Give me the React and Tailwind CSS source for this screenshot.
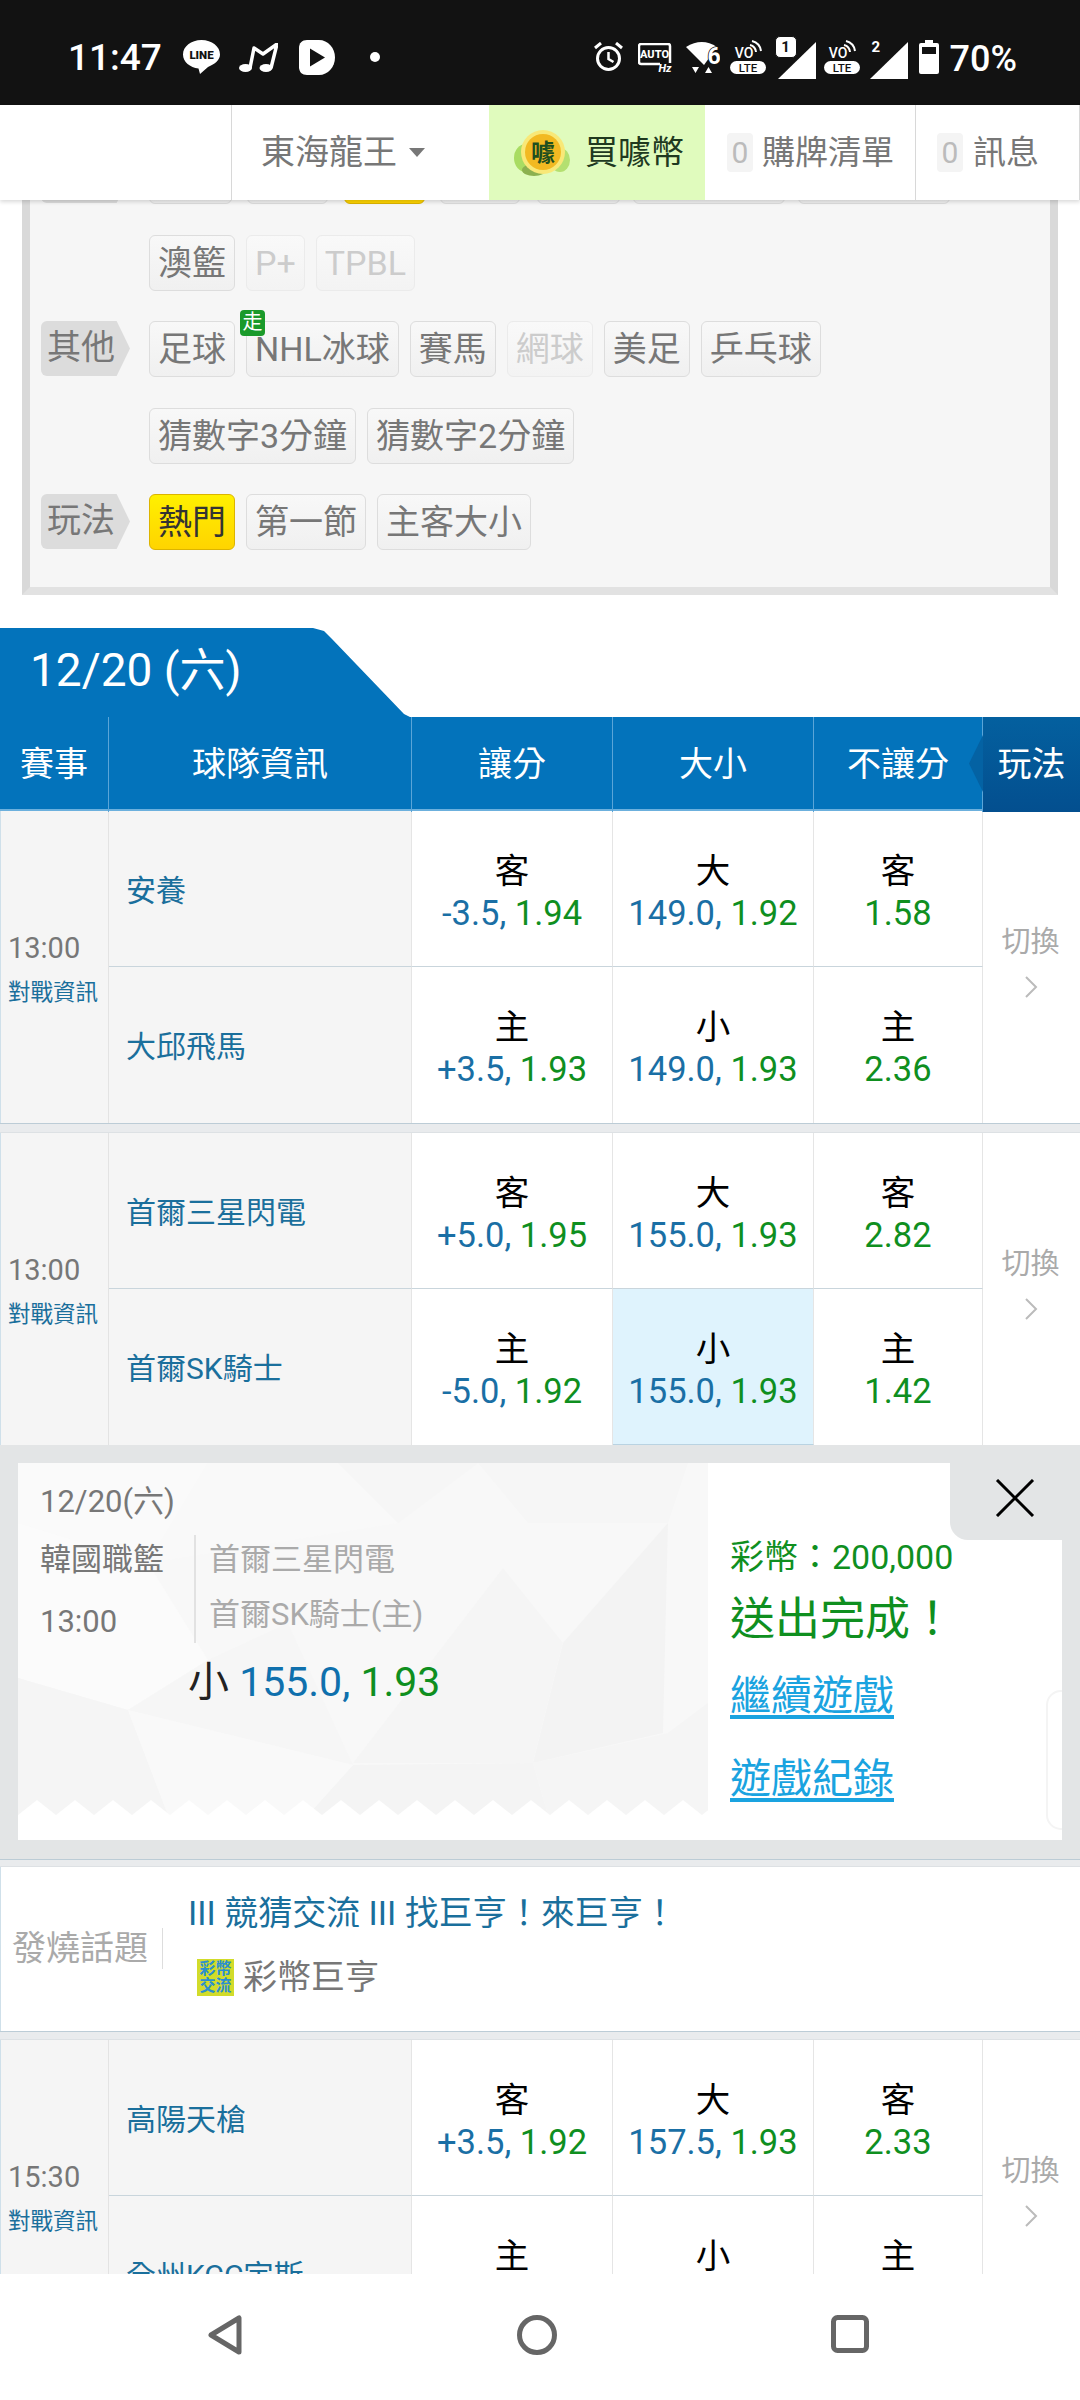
import { Fragment } from "react";

const games = [
  {
    time: "13:00",
    rows: [
      { team: "安養", side: "客", line: "-3.5", odds: "1.94", ou: "大", total: "149.0", ouOdds: "1.92", ml: "1.58" },
      { team: "大邱飛馬", side: "主", line: "+3.5", odds: "1.93", ou: "小", total: "149.0", ouOdds: "1.93", ml: "2.36" },
    ],
  },
  {
    time: "13:00",
    rows: [
      { team: "首爾三星閃電", side: "客", line: "+5.0", odds: "1.95", ou: "大", total: "155.0", ouOdds: "1.93", ml: "2.82" },
      { team: "首爾SK騎士", side: "主", line: "-5.0", odds: "1.92", ou: "小", total: "155.0", ouOdds: "1.93", ml: "1.42", picked: true },
    ],
  },
];

const lastGame = {
  time: "15:30",
  rows: [
    { team: "高陽天槍", side: "客", line: "+3.5", odds: "1.92", ou: "大", total: "157.5", ouOdds: "1.93", ml: "2.33" },
    { team: "全州KCC宇斯", side: "主", line: "+3.5", odds: "1.93", ou: "小", total: "157.5", ouOdds: "1.93", ml: "1.58" },
  ],
};

const VoLte = ({ className }) => (
  <svg className={className} width="36" height="34" viewBox="0 0 36 34">
    <text x="14" y="18" textAnchor="middle" fontSize="14" fontWeight="500" fill="#fff">VO</text>
    <path d="M20 5a8 8 0 0 1 6 7M22 1a12 12 0 0 1 9 10" fill="none" stroke="#fff" strokeWidth="2" />
    <rect x="0" y="21" width="36" height="13" rx="6.500" fill="#fff" />
    <text x="18" y="31.500" textAnchor="middle" fontSize="11.500" fontWeight="500" fill="#121212">LTE</text>
  </svg>
);

const StatusBar = () => (
  <div className="h-[105px] shrink-0 bg-[#121212] flex items-center text-white pt-[9px]">
    <span className="ml-[68px] text-[37px] font-medium leading-none w-[92px]">11:47</span>
    <svg className="ml-[23px]" width="37" height="34" viewBox="0 0 37 34">
      <path d="M18.5 0C8 0 0 6.500 0 14.500c0 7.500 7 13 15.500 14l1.500 5.500 8-7c7-3 12-7 12-12.500C37 6.500 29 0 18.500 0z" fill="#fff" />
      <text x="18.500" y="19" textAnchor="middle" fontSize="11.500" fontWeight="900" fill="#121212">LINE</text>
    </svg>
    <svg className="ml-[19px]" width="39" height="29" viewBox="0 0 39 29">
      <path d="M11 25L15 5l9 6 14-10-6 24" fill="none" stroke="#fff" strokeWidth="3.500" strokeLinejoin="round" />
      <ellipse cx="6.500" cy="25" rx="6.500" ry="4" fill="#fff" />
      <ellipse cx="27" cy="25" rx="6.500" ry="4" fill="#fff" />
    </svg>
    <svg className="ml-[21px]" width="36" height="35" viewBox="0 0 36 35">
      <path d="M8 0h12c9 0 16 8 16 17.500S29 35 20 35H8c-5 0-8-3-8-8V8c0-5 3-8 8-8z" fill="#fff" />
      <path d="M11 8.500l15 9-15 9z" fill="#121212" />
    </svg>
    <span className="ml-[35px] w-[10px] h-[10px] rounded-full bg-white" />

    <div className="ml-auto flex items-center mr-[63px]">
      <svg width="29" height="30" viewBox="0 0 29 30">
        <circle cx="14.500" cy="16.500" r="11" fill="none" stroke="#fff" strokeWidth="3" />
        <path d="M14.500 10v7l5 3" fill="none" stroke="#fff" strokeWidth="2.500" />
        <path d="M1 6l6-5M28 6l-6-5" fill="none" stroke="#fff" strokeWidth="3" />
      </svg>
      <svg className="ml-[15px]" width="35" height="29" viewBox="0 0 35 29">
        <path d="M32 20V3a2 2 0 0 0-2-2H3a2 2 0 0 0-2 2v16a2 2 0 0 0 2 2h19" fill="none" stroke="#fff" strokeWidth="2.500" />
        <text x="16.500" y="15" textAnchor="middle" fontSize="11" fontWeight="800" fill="#fff">AUTO</text>
        <text x="27" y="28.500" textAnchor="middle" fontSize="11" fontWeight="800" fontStyle="italic" fill="#fff">Hz</text>
      </svg>
      <svg className="ml-[13px]" width="34" height="34" viewBox="0 0 34 34">
        <path d="M0 7Q16 -3 31 7L18 25z" fill="#fff" />
        <path d="M6 27h7l-3.500 6zM19 33l3.500-6 3.500 6z" fill="#fff" />
        <text x="28" y="24" textAnchor="middle" fontSize="23" fontWeight="700" fill="#fff" stroke="#121212" strokeWidth="1.500" paintOrder="stroke">6</text>
      </svg>
      <VoLte className="ml-[10px]" />
      <div className="relative w-[40px] h-[40px] ml-[9px] mb-[-6px]">
        <svg className="absolute left-[3px] top-[2px]" width="38" height="37" viewBox="0 0 38 37">
          <path d="M38 0v37H0z" fill="#fff" />
        </svg>
        <span className="absolute left-0 top-[-4px] w-[22px] h-[22px] rounded-[5px] bg-white border border-[#121212] text-[#121212] text-[15px] font-bold leading-[20px] text-center">1</span>
      </div>
      <VoLte className="ml-[9px]" />
      <div className="relative w-[48px] h-[40px] mb-[-6px]">
        <svg className="absolute left-[10px] top-[2px]" width="38" height="37" viewBox="0 0 38 37">
          <path d="M38 0v37H0z" fill="#fff" />
        </svg>
        <span className="absolute left-[12px] top-[-2px] text-[15px] font-bold leading-[18px]">2</span>
      </div>
      <svg className="ml-[11px]" width="20" height="34" viewBox="0 0 20 34">
        <path d="M6 0h8v3h4a2 2 0 0 1 2 2v27a2 2 0 0 1-2 2H2a2 2 0 0 1-2-2V5a2 2 0 0 1 2-2h4z" fill="#fff" />
        <rect x="3" y="7" width="14" height="7" fill="#121212" />
      </svg>
      <span className="ml-[11px] mt-[3px] text-[36px] font-medium leading-none">70%</span>
    </div>
  </div>
);

const CoinIcon = () => (
  <svg width="56" height="50" viewBox="0 0 56 50">
    <ellipse cx="12" cy="30" rx="12" ry="14" fill="#a9dc62" />
    <ellipse cx="46" cy="32" rx="10" ry="12" fill="#b4e070" />
    <ellipse cx="20" cy="42" rx="12" ry="6" fill="#8cb050" />
    <circle cx="29" cy="24" r="22" fill="#f8e878" />
    <circle cx="29" cy="24" r="18" fill="#f2b922" />
    <text x="29" y="33" textAnchor="middle" fontSize="24" fontWeight="700" fill="#1f4f1f">噱</text>
  </svg>
);

const CountBadge = () => (
  <span className="w-[26px] h-[39px] rounded-[4px] bg-[#f4f4f4] text-[#bbbbbb] text-[30px] leading-[39px] text-center">0</span>
);

const TopNav = () => (
  <div className="h-[95px] shrink-0 bg-white flex items-stretch text-[#777777] text-[33px] shadow-[0_2px_4px_rgba(0,0,0,0.15)] relative z-10">
    <div className="w-[232px] border-r border-[#d8d8d8]" />
    <div className="w-[257px] flex items-center pl-[29px] text-[34px]">
      東海龍王
      <span className="ml-[12px] w-0 h-0 border-x-[8px] border-x-transparent border-t-[9px] border-t-[#777777]" />
    </div>
    <div className="w-[216px] bg-[#e0fbbd] flex items-center pl-[25px] text-[#20391f]">
      <CoinIcon />
      <span className="ml-[15px]">買噱幣</span>
    </div>
    <div className="w-[211px] flex items-center pl-[22px] gap-[9px] border-r border-[#d8d8d8]">
      <CountBadge />
      購牌清單
    </div>
    <div className="flex-1 flex items-center pl-[21px] gap-[10px] border-r border-[#d8d8d8]">
      <CountBadge />
      訊息
    </div>
  </div>
);

const Chip = ({ children, off, active, className = "" }) => (
  <span
    className={`relative h-[56px] px-[8px] rounded-[6px] border text-[34px] leading-[54px] whitespace-nowrap bg-gradient-to-b ${
      active
        ? "from-[#fff000] to-[#ffd400] border-[#dcb400] text-[#333333]"
        : off
          ? "from-[#f9f9f9] to-[#f3f3f3] border-[#ebebeb] text-[#cccccc]"
          : "from-[#f8f8f8] to-[#f0f0f0] border-[#dddddd] text-[#777777]"
    } ${className}`}
  >
    {children}
  </span>
);

const RowLabel = ({ children }) => (
  <span className="w-[89px] h-[55px] pl-[6px] mr-[8px] bg-[#dcdcdc] rounded-l-[6px] text-[34px] leading-[52px] text-[#777777] [clip-path:polygon(0_0,85%_0,100%_50%,85%_100%,0_100%)]">
    {children}
  </span>
);

const FilterRow = ({ label, children }) => (
  <div className={`flex gap-[11px] h-[56px] ${label ? "" : "pl-[108px]"}`}>
    {label && <RowLabel>{label}</RowLabel>}
    {children}
  </div>
);

const FilterPanel = () => (
  <div className="mx-[22px] -mt-[52px] h-[447px] bg-[#f6f6f6] border-x-[8px] border-x-[#d9d9d9] border-b-[8px] border-b-[#e2e2e2] pl-[11px] flex flex-col gap-[30.500px]">
    <FilterRow label=" ">
      <Chip className="w-[83px]" />
      <Chip className="w-[81px] ml-[4px]" />
      <Chip active className="w-[81px] ml-[5px]" />
      <Chip className="w-[80px] ml-[4px]" />
      <Chip className="w-[83px] ml-[6px]" />
      <Chip className="w-[152px] ml-[2px]" />
      <Chip className="w-[152px] ml-[2px]" />
    </FilterRow>
    <FilterRow>
      <Chip>澳籃</Chip>
      <Chip off>P+</Chip>
      <Chip off>TPBL</Chip>
    </FilterRow>
    <FilterRow label="其他">
      <Chip>足球</Chip>
      <Chip>
        NHL冰球
        <span className="absolute left-[-7px] top-[-12px] w-[25px] h-[26px] rounded-[4px] bg-[#1a9a2a] text-white text-[20px] leading-[25px] text-center">走</span>
      </Chip>
      <Chip>賽馬</Chip>
      <Chip off>網球</Chip>
      <Chip>美足</Chip>
      <Chip>乒乓球</Chip>
    </FilterRow>
    <FilterRow>
      <Chip>猜數字3分鐘</Chip>
      <Chip>猜數字2分鐘</Chip>
    </FilterRow>
    <FilterRow label="玩法">
      <Chip active>熱門</Chip>
      <Chip>第一節</Chip>
      <Chip>主客大小</Chip>
    </FilterRow>
  </div>
);

const HEAD = ["賽事", "球隊資訊", "讓分", "大小", "不讓分"];

const TableHead = () => (
  <>
    <div className="mt-[33px] w-[410px] h-[89px] bg-[#0373bb] text-white text-[46px] leading-[85px] pl-[30px] [clip-path:polygon(0_0,313px_0,324px_3px,332px_11px,404px_86px,410px_89px,0_89px)]">
      12/20 (六)
    </div>
    <div className="relative h-[94px] bg-[#0373bb] border-b-2 border-[#6cb0dd] grid grid-cols-[109px_303px_201px_201px_169px_97px] text-white text-[34px] leading-[95px] text-center">
      {HEAD.map((h) => (
        <span key={h} className="border-r border-[#5aa5d8]">{h}</span>
      ))}
      <span className="bg-gradient-to-b from-[#04609f] to-[#034f8f]">玩法</span>
      <span className="absolute left-[969px] top-[18px] w-[14px] h-[57px] bg-[#0462a3] [clip-path:polygon(100%_0,0_50%,100%_100%)]" />
    </div>
  </>
);

const OddsCell = ({ top, blue, green, picked, last }) => (
  <div
    className={`flex flex-col items-center justify-center pt-[6px] border-r border-[#e5e5e5] ${
      picked ? "bg-[#dff3fd] border-b border-b-[#b9d3e2]" : last ? "" : "border-b border-b-[#c9d5dc]"
    } text-[34.500px] leading-[42px]`}
  >
    <span className="text-black">{top}</span>
    <span className="whitespace-nowrap">
      {blue && <span className="text-[#1a6fa5]">{blue}, </span>}
      <span className="text-[#0f8f1f]">{green}</span>
    </span>
  </div>
);

const GameRows = ({ game }) => (
  <div className="grid grid-cols-[109px_303px_201px_201px_169px_97px] grid-rows-[156px_156px] bg-white">
    <div className="row-span-2 bg-[#f5f5f5] border-l border-l-[#cfe0ea] border-r border-r-[#e3e3e3] flex flex-col justify-center pl-[7px]">
      <span className="text-[29px] leading-[40px] text-[#777777]">{game.time}</span>
      <span className="text-[22.500px] leading-[30px] text-[#1a6f9c] mt-[9px] whitespace-nowrap">對戰資訊</span>
    </div>
    {game.rows.map((r, i) => (
      <Fragment key={r.team}>
        <div
          style={{ gridColumn: 2, gridRow: i + 1 }}
          className={`bg-[#f5f5f5] border-r border-[#e5e5e5] flex items-center pl-[17px] pt-[3px] text-[30px] text-[#1a6f9c] ${i === 0 ? "border-b border-b-[#c9d5dc]" : ""}`}
        >
          {r.team}
        </div>
        <div style={{ gridColumn: 3, gridRow: i + 1 }} className="grid">
          <OddsCell top={r.side} blue={r.line} green={r.odds} last={i === 1} />
        </div>
        <div style={{ gridColumn: 4, gridRow: i + 1 }} className="grid">
          <OddsCell top={r.ou} blue={r.total} green={r.ouOdds} picked={r.picked} last={i === 1} />
        </div>
        <div style={{ gridColumn: 5, gridRow: i + 1 }} className="grid">
          <OddsCell top={r.side} green={r.ml} last={i === 1} />
        </div>
      </Fragment>
    ))}
    <div style={{ gridColumn: 6, gridRow: "1 / span 2" }} className="flex flex-col items-center justify-center pb-[14px] pr-[2px]">
      <span className="text-[29px] leading-[40px] text-[#aaaaaa]">切換</span>
      <svg className="mt-[14px]" width="14" height="22" viewBox="0 0 14 22">
        <path d="M2 1l10 10L2 21" fill="none" stroke="#bbbbbb" strokeWidth="2" />
      </svg>
    </div>
  </div>
);

const Band = ({ className = "h-[10px]" }) => (
  <div className={`${className} bg-[#e9ebed] border-y border-t-[#bcccd6] border-b-[#dde1e4]`} />
);

const ZIGZAG = Array.from({ length: 19 }, (_, i) => i * 38);

const Ticket = () => (
  <div className="h-[414px] bg-[#e3e5e6] px-[18px] pt-[18px]">
    <div className="relative h-[377px] bg-white flex overflow-hidden">
      <div className="relative w-[690px] h-[352px] bg-[#f8f8f8] pl-[22px] pt-[19px] text-[31px] text-[#777777]">
        <svg className="absolute inset-0" width="690" height="352" viewBox="0 0 690 352">
          <path d="M0 0h190l-60 100L0 60z" fill="#fafafa" />
          <path d="M190 0h130l60 60-250 40z" fill="#f9f9f9" />
          <path d="M320 0h140l-80 60z" fill="#f6f6f6" />
          <path d="M460 0h210l-20 60H510z" fill="#f6f6f6" />
          <path d="M0 215l110 32 80-50-60-97L0 60z" fill="#fbfbfb" />
          <path d="M110 247l225 55L270 160 190 197z" fill="#f6f6f6" />
          <path d="M545 180l-30 120H335l150-195z" fill="#f5f5f5" />
          <path d="M650 60l-5 210-130 30 30-120 105-120z" fill="#f3f3f3" />
          <path d="M0 215v137h150l-40-105z" fill="#f5f5f5" />
          <path d="M335 302l-45 50h240l-15-52z" fill="#f4f4f4" />
          <path d="M110 247l40 105h140l45-50z" fill="#f9f9f9" />
          <path d="M650 270l40-30v112h-160l-15-52z" fill="#f5f5f5" />
        </svg>
        <div className="relative">
          <div className="leading-[40px]">12/20(六)</div>
          <div className="flex mt-[13px] h-[108px]">
            <div className="w-[154px] leading-[50px]">
              <div>韓國職籃</div>
              <div className="mt-[12px]">13:00</div>
            </div>
            <div className="border-l-2 border-[#e2e2e2] pl-[13px] leading-[50px] text-[#aaaaaa]">
              <div>首爾三星閃電</div>
              <div className="mt-[5px]">首爾SK騎士(主)</div>
            </div>
          </div>
          <div className="mt-[14px] pl-[148px] text-[41px] leading-[50px] whitespace-nowrap">
            <span className="text-[#222222]">小 </span>
            <span className="text-[#0f70ad]">155.0, </span>
            <span className="text-[#0f8f1f]">1.93</span>
          </div>
        </div>
        <svg className="absolute left-0 bottom-0" width="690" height="15" viewBox="0 0 690 15">
          {ZIGZAG.map((x) => (
            <path key={x} d={`M${x} 15l19-15 19 15z`} fill="#ffffff" />
          ))}
        </svg>
      </div>
      <div className="flex-1 pl-[22px] pt-[72px] flex flex-col items-start">
        <span className="text-[34px] leading-[44px] text-[#0f8f1f] whitespace-nowrap">彩幣：200,000</span>
        <span className="mt-[13px] text-[45px] leading-[56px] text-[#0f8f1f] whitespace-nowrap">送出完成！</span>
        <span className="mt-[23px] text-[41px] leading-[50px] text-[#1aa3e0] underline decoration-[4px] underline-offset-[5px]">繼續遊戲</span>
        <span className="mt-[33px] text-[41px] leading-[50px] text-[#1aa3e0] underline decoration-[4px] underline-offset-[5px]">遊戲紀錄</span>
      </div>
      <div className="absolute right-[-14px] top-[227px] w-[30px] h-[140px] rounded-[16px] border-2 border-[#f4f4f4]" />
      <div className="absolute right-0 top-0 w-[112px] h-[77px] bg-[#e3e5e6] rounded-bl-[18px] flex items-center justify-center pl-[18px] pb-[8px]">
        <svg width="40" height="38" viewBox="0 0 40 38">
          <path d="M2 1l36 36M38 1L2 37" fill="none" stroke="#000" strokeWidth="3" />
        </svg>
      </div>
    </div>
  </div>
);

const TopicBox = () => (
  <div className="h-[164px] bg-white border-l border-l-[#cfe0ea] flex items-center">
    <div className="w-[162px] h-[41px] border-r border-[#dddddd] pl-[11px] text-[34px] leading-[41px] text-[#aaaaaa] whitespace-nowrap mt-[-2px]">發燒話題</div>
    <div className="pl-[25px] mt-[-8px]">
      <div className="text-[34px] leading-[44px] text-[#1a6f9c] whitespace-nowrap">III 競猜交流 III 找巨亨！來巨亨！</div>
      <div className="flex items-center pl-[9px] mt-[20px] text-[34px] leading-[44px] text-[#777777]">
        <span className="w-[37px] h-[37px] bg-[#d2dc2a] flex flex-col items-center justify-center text-[16px] leading-[17px] font-bold text-[#2a8fd0]">
          <span>彩幣</span>
          <span>交流</span>
        </span>
        <span className="ml-[9px]">彩幣巨亨</span>
      </div>
    </div>
  </div>
);

const BottomNav = () => (
  <div className="h-[126px] shrink-0 bg-white relative z-10 flex items-start pt-[41px] pl-[207px] gap-[274px]">
    <svg width="36" height="40" viewBox="0 0 36 40">
      <path d="M32 3v34L4 20z" fill="none" stroke="#666666" strokeWidth="5" strokeLinejoin="round" />
    </svg>
    <svg width="40" height="40" viewBox="0 0 40 40">
      <circle cx="20" cy="20" r="17.500" fill="none" stroke="#666666" strokeWidth="5" />
    </svg>
    <svg width="38" height="38" viewBox="0 0 38 38">
      <rect x="2.500" y="2.500" width="33" height="33" rx="4" fill="none" stroke="#666666" strokeWidth="5" />
    </svg>
  </div>
);

export default function App() {
  return (
    <div className="w-[1080px] h-[2400px] overflow-hidden flex flex-col bg-white [font-family:Roboto,'Noto_Sans_CJK_TC',sans-serif]">
      <StatusBar />
      <TopNav />
      <div className="flex-1 overflow-hidden">
        <FilterPanel />
        <TableHead />
        {games.map((g, i) => (
          <Fragment key={i}>
            {i > 0 && <Band />}
            <GameRows game={g} />
          </Fragment>
        ))}
        <Ticket />
        <Band className="h-[8px]" />
        <TopicBox />
        <Band className="h-[9px]" />
        <GameRows game={lastGame} />
      </div>
      <BottomNav />
    </div>
  );
}
